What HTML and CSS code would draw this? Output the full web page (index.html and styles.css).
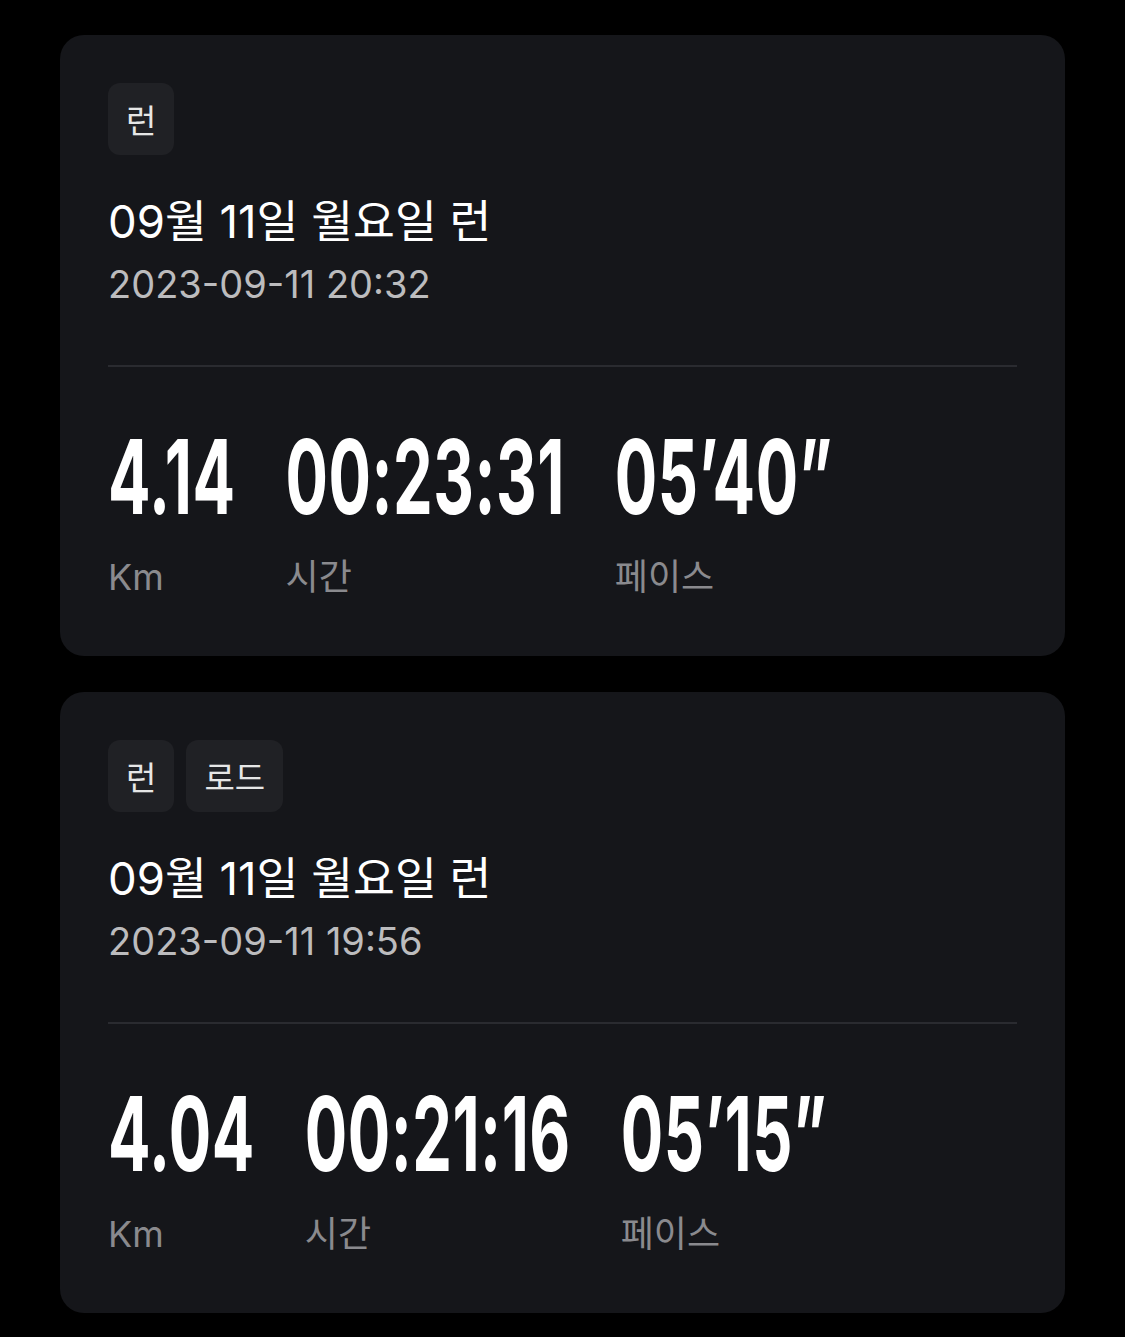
FILE: index.html
```html
<!DOCTYPE html>
<html lang="ko">
<head>
<meta charset="utf-8">
<link rel="stylesheet" href="styles.css">
</head>
<body>
<div class="list">
  <section class="card">
    <div class="tags"><span class="tag">런</span></div>
    <h2 class="title">09월 11일 월요일 런</h2>
    <div class="date">2023-09-11 20:32</div>
    <hr class="divider">
    <div class="stats">
      <div class="stat"><div class="num">4.14</div><div class="label">Km</div></div>
      <div class="stat"><div class="num">00:23:31</div><div class="label">시간</div></div>
      <div class="stat"><div class="num">05’40”</div><div class="label">페이스</div></div>
    </div>
  </section>
  <section class="card">
    <div class="tags"><span class="tag">런</span><span class="tag">로드</span></div>
    <h2 class="title">09월 11일 월요일 런</h2>
    <div class="date">2023-09-11 19:56</div>
    <hr class="divider">
    <div class="stats">
      <div class="stat"><div class="num">4.04</div><div class="label">Km</div></div>
      <div class="stat"><div class="num">00:21:16</div><div class="label">시간</div></div>
      <div class="stat"><div class="num">05’15”</div><div class="label">페이스</div></div>
    </div>
  </section>
</div>
</body>
</html>
```
FILE: styles.css
```css
html, body {
  margin: 0;
  background: #000;
}
body {
  padding: 35px 60px 24px;
  font-family: Inter, "Noto Sans CJK KR", sans-serif;
  color: #fff;
}
.list {
  display: flex;
  flex-direction: column;
  gap: 36px;
}
.card {
  background: #15161a;
  border-radius: 24px;
  padding: 48px 48px 0;
  height: 621px;
  box-sizing: border-box;
}
.tags {
  display: flex;
  gap: 12px;
}
.tag {
  height: 72px;
  padding: 0 18px;
  border-radius: 12px;
  background: #202125;
  color: #e6e6e6;
  font-size: 33px;
  display: flex;
  align-items: center;
  justify-content: center;
  font-family: "Noto Sans CJK KR", sans-serif;
}
.title {
  margin: 41px 0 0;
  font-size: 45.5px;
  line-height: 52px;
  font-weight: 400;
  color: #fff;
}
.date {
  margin-top: 14px;
  font-size: 38px;
  line-height: 44px;
  color: #bcbcbe;
}
.divider {
  margin: 59px 0 0;
  border: 0;
  height: 2px;
  background: #2a2b30;
}
.stats {
  display: flex;
  gap: 50px;
  margin-top: 64px;
}
.stat {
  display: flex;
  flex-direction: column;
}
.num {
  font-weight: 700;
  font-size: 63px;
  line-height: 90px;
  letter-spacing: 0.5px;
  transform: scaleY(1.64);
  color: #fff;
}
.label {
  margin-top: 34px;
  font-size: 36px;
  line-height: 44px;
  color: #8a8a8e;
}
```
